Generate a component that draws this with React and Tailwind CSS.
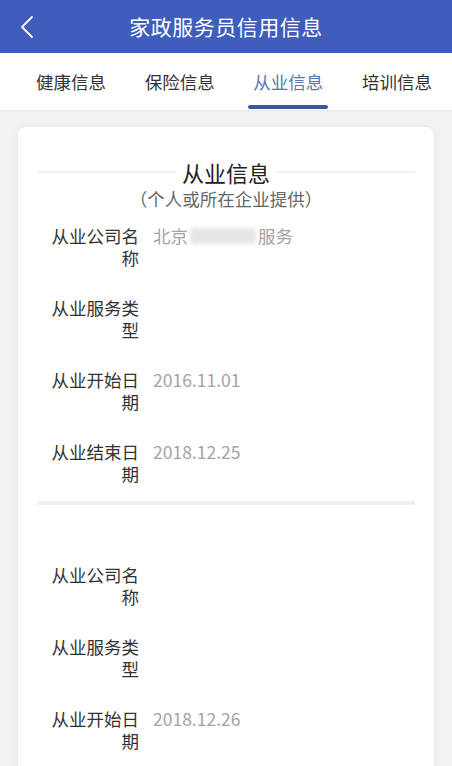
import React from 'react';

const tabs = ['健康信息', '保险信息', '从业信息', '培训信息'];

const sections = [
  [
    { label: '从业公司名称', value: 'blurred' },
    { label: '从业服务类型', value: '' },
    { label: '从业开始日期', value: '2016.11.01' },
    { label: '从业结束日期', value: '2018.12.25' },
  ],
  [
    { label: '从业公司名称', value: '' },
    { label: '从业服务类型', value: '' },
    { label: '从业开始日期', value: '2018.12.26' },
  ],
];

function Row({ label, value }) {
  return (
    <div className="flex items-start">
      <div className="w-[90px] shrink-0 text-right text-[17.5px] leading-[22px] text-[#333]">{label}</div>
      <div className="ml-[14px] text-[17.5px] leading-[22px] text-[#a3a3a3] flex items-center">
        {value === 'blurred' ? (
          <>
            <span>北京</span>
            <span className="inline-block w-[66px] h-[16px] mx-[2px] rounded-[4px] bg-[#e6e6e6] blur-[2px]" />
            <span>服务</span>
          </>
        ) : (
          value
        )}
      </div>
    </div>
  );
}

export default function App() {
  return (
    <div
      className="w-[452px] h-[766px] overflow-hidden bg-[#f2f2f2]"
      style={{ fontFamily: '"Noto Sans CJK SC", "Noto Sans", sans-serif' }}
    >
      {/* Header */}
      <div className="relative h-[53px] bg-[#3f5dba] flex items-center justify-center">
        <svg className="absolute left-[18px] top-[14px]" width="18" height="26" viewBox="0 0 18 26">
          <polyline points="14,3 4,13 14,23" fill="none" stroke="#ffffff" strokeWidth="1.8" strokeLinecap="round" strokeLinejoin="round" />
        </svg>
        <span className="text-white text-[21px] tracking-[0.5px]">家政服务员信用信息</span>
      </div>

      {/* Tabs */}
      <div className="h-[57px] bg-white flex items-start pl-[36px] pr-[20px] justify-between shadow-[0_1px_2px_rgba(0,0,0,0.04)]">
        {tabs.map((t, i) => (
          <div key={t} className="relative h-full flex flex-col items-center">
            <span className={`mt-[17px] text-[17.5px] leading-[24px] ${i === 2 ? 'text-[#5a74b2]' : 'text-[#333]'}`}>{t}</span>
            {i === 2 && <div className="absolute bottom-[1px] w-[80px] h-[4px] rounded-full bg-[#3b5a9e]" />}
          </div>
        ))}
      </div>

      {/* Card */}
      <div className="mx-[18px] mt-[17px] bg-white rounded-[8px] shadow-[0_0_6px_rgba(0,0,0,0.06)] px-[19px] pb-[40px]">
        <div className="pt-[30px] flex items-center">
          <div className="flex-1 h-[2px] bg-[#f0f0f0]" />
          <span className="px-[6px] text-[22px] leading-[30px] text-[#222]">从业信息</span>
          <div className="flex-1 h-[2px] bg-[#f0f0f0]" />
        </div>
        <div className="text-center text-[17.5px] leading-[24px] text-[#666]">（个人或所在企业提供）</div>

        <div className="mt-[14px] pl-[12px] flex flex-col gap-[28px]">
          {sections[0].map((r, i) => (
            <Row key={i} {...r} />
          ))}
        </div>

        <div className="mt-[16px] h-[4px] bg-[#efefef]" />

        <div className="mt-[59px] pl-[12px] flex flex-col gap-[28px]">
          {sections[1].map((r, i) => (
            <Row key={i} {...r} />
          ))}
        </div>
      </div>
    </div>
  );
}
